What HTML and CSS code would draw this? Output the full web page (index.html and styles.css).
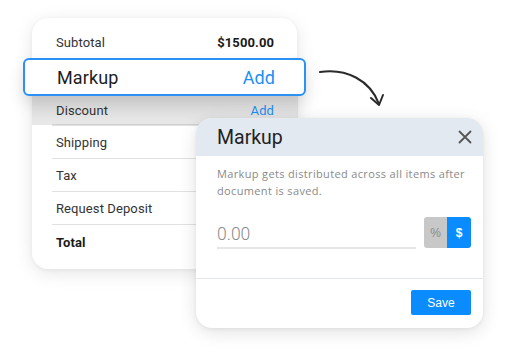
FILE: index.html
```html
<!DOCTYPE html>
<html>
<head>
<meta charset="utf-8">
<link rel="stylesheet" href="styles.css">
</head>
<body>
<div class="stage">
  <div class="card">
    <div class="row subtotal"><span>Subtotal</span><span class="amount">$1500.00</span></div>
    <div class="row markup"><span>Markup</span><span class="add">Add</span></div>
    <div class="row discount"><span>Discount</span><span class="add">Add</span></div>
    <div class="row line"><span>Shipping</span></div>
    <div class="row line"><span>Tax</span></div>
    <div class="row line"><span>Request Deposit</span></div>
    <div class="row line total"><span>Total</span></div>
  </div>

  <svg class="arrow" width="70" height="50" viewBox="0 0 70 50">
    <path d="M2 12 C 28 8, 52 20, 61 44" fill="none" stroke="#2b2b2b" stroke-width="2" stroke-linecap="round"/>
    <path d="M53 38 L61 45 L65 35" fill="none" stroke="#2b2b2b" stroke-width="2" stroke-linecap="round" stroke-linejoin="round"/>
  </svg>

  <div class="modal">
    <div class="modal-head">
      <span class="title">Markup</span>
      <svg class="close" width="14" height="14" viewBox="0 0 14 14"><path d="M1.5 1.5 L12.5 12.5 M12.5 1.5 L1.5 12.5" stroke="#555" stroke-width="1.8" stroke-linecap="round"/></svg>
    </div>
    <div class="modal-body">
      <p class="desc">Markup gets distributed across all items after document is saved.</p>
      <div class="input-row">
        <div class="field">0.00</div>
        <div class="toggle"><span class="pct">%</span><span class="usd">$</span></div>
      </div>
    </div>
    <div class="modal-foot">
      <button class="save">Save</button>
    </div>
  </div>
</div>
</body>
</html>
```
FILE: styles.css
```css
* { box-sizing: border-box; }
html, body { margin: 0; padding: 0; background: #fff; }
body { width: 507px; height: 357px; overflow: hidden; font-family: Roboto, "Liberation Sans", sans-serif; }
.stage { position: relative; width: 507px; height: 357px; padding: 18px 0 0 32px; }

.card {
  width: 265px; height: 251px; background: #fff; border-radius: 16px;
  box-shadow: 0 4px 18px rgba(0,0,0,0.10), 0 1px 4px rgba(0,0,0,0.05);
  padding: 9px 19px 0 20px;
  display: flex; flex-direction: column;
}
.row {
  display: flex; justify-content: space-between; align-items: center;
  padding: 0 4px; font-size: 13px; color: #333; letter-spacing: 0.1px;
}
.subtotal { height: 31px; }
.amount { font-weight: 700; color: #1a1a1a; }
.markup {
  height: 38px; margin: 0 -28px 0 -29px; padding: 0 29px 0 32px;
  border: 2px solid #2a92f5; border-radius: 6px; background: #fff;
  font-size: 18px; color: #1e1e1e; position: relative; z-index: 1;
  box-shadow: 0 8px 16px rgba(0,0,0,0.12);
}
.markup .add { color: #1e8ff5; font-size: 18px; }
.add { color: #1e8ff5; }
.discount {
  height: 29px; margin: 0 -20px; padding: 0 24px;
  background: linear-gradient(#dcdcdc, #e8e8e8);
  position: relative;
}
.discount::after {
  content: ""; position: absolute; left: 20px; right: 20px; bottom: 0; height: 1px; background: #d0d0d0;
}
.line { height: 33px; border-top: 1px solid #e2e2e2; }
.total { height: 36px; font-weight: 700; color: #1a1a1a; }

.arrow { position: absolute; left: 318px; top: 60px; }

.modal {
  position: absolute; left: 196px; top: 118px; width: 287px; height: 210px;
  background: #fff; border-radius: 16px; overflow: hidden;
  box-shadow: 0 4px 18px rgba(0,0,0,0.12), 0 1px 4px rgba(0,0,0,0.06);
  display: flex; flex-direction: column;
}
.modal-head {
  height: 38px; background: #e2e9f1; display: flex; align-items: center; justify-content: space-between;
  padding: 0 11px 0 21px;
}
.title { font-size: 19.5px; color: #222; }
.modal-body { padding: 9px 12px 0 21px; flex: 1; border-bottom: 1px solid #e3e6eb; }
.desc {
  margin: 0; font-family: "Open Sans", sans-serif; font-size: 11px; line-height: 17px; color: #8a8a8a;
  letter-spacing: 0.35px;
}
.input-row { display: flex; align-items: center; margin-top: 19px; gap: 8px; }
.field {
  width: 199px; font-size: 17.5px; color: #8a8a8a; font-weight: 300; padding-bottom: 3px;
  border-bottom: 2px solid #e6e6e6; height: 30px; line-height: 31px; margin-top: 1px;
}
.toggle { display: flex; height: 31px; border-radius: 3px; overflow: hidden; margin-top: -2px; }
.toggle span { width: 23px; display: flex; align-items: center; justify-content: center; font-family: "Liberation Sans", sans-serif; font-size: 12px; }
.pct { background: #c8c8c8; color: #8a8a8a; }
.usd { background: #0a8cff; color: #fff; font-weight: 700; width: 24px !important; }
.modal-foot { height: 49px; display: flex; justify-content: flex-end; align-items: flex-start; padding: 11px 12px 0 0; }
.save {
  width: 60px; height: 25px; border: none; border-radius: 2px; background: #0a8cff; color: #fff;
  font-family: "Liberation Sans", sans-serif; font-size: 12px; padding: 0;
}
```
